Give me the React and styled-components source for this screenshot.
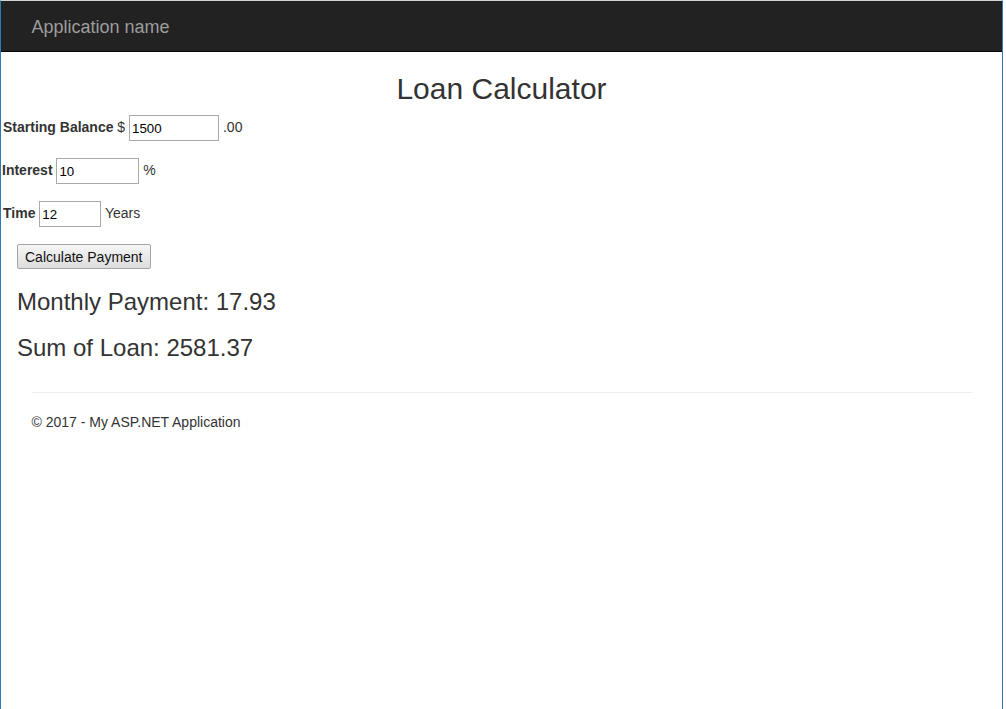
import React from "react";
import styled, { createGlobalStyle } from "styled-components";

const Global = createGlobalStyle`
  html, body { margin: 0; padding: 0; background: #fff; }
  body {
    font-family: "Liberation Sans", Arial, sans-serif;
    font-size: 14px;
    line-height: 1.42857;
    color: #333;
  }
  * { box-sizing: border-box; }
`;

const Screen = styled.div`
  width: 1006px;
  height: 709px;
  overflow: hidden;
  display: flex;
  background: #fff;
`;

const Window = styled.div`
  width: 1003px;
  height: 709px;
  border-left: 1px solid #2b79b5;
  border-right: 1px solid #2b79b5;
  border-top: 1px solid #d4d4d4;
  display: flex;
  flex-direction: column;
`;

const Navbar = styled.nav`
  height: 51px;
  background: #222;
  border-bottom: 1px solid #080808;
  flex-shrink: 0;
`;

const NavContainer = styled.div`
  width: 970px;
  margin: 0 auto;
  padding: 0 15px;
`;

const Brand = styled.a`
  display: block;
  padding: 16px 0 14px;
  font-size: 18px;
  line-height: 20px;
  color: #9d9d9d;
  text-decoration: none;
`;

const Body = styled.main`
  display: block;
`;

const Title = styled.h2`
  margin: 20px 0 10px;
  font-size: 30px;
  font-weight: 500;
  line-height: 33px;
  text-align: center;
  color: #333;
`;

const Form = styled.form`
  display: flex;
  flex-direction: column;
  gap: 17px;
  padding-left: 1px;
`;

const Row = styled.div`
  display: flex;
  align-items: center;
  height: 26px;
  padding-left: ${(p) => p.$indent || 0}px;
  white-space: pre;
`;

const Label = styled.b`
  font-weight: bold;
  color: #333;
`;

const Field = styled.input`
  width: ${(p) => p.$w}px;
  height: 26px;
  border: 1px solid #a9a9a9;
  padding: 1px 2px;
  font-family: "Liberation Sans", Arial, sans-serif;
  font-size: 13.3px;
  color: #000;
  background: #fff;
  margin: 0;
  outline: none;
`;

const Unit = styled.span`
  color: #333;
`;

const Results = styled.div`
  padding-left: 16px;
  margin-top: 17px;
`;

const Button = styled.button`
  display: block;
  height: 25px;
  padding: 0 7px;
  font-family: "Liberation Sans", Arial, sans-serif;
  font-size: 14px;
  color: #111;
  background: linear-gradient(#f6f6f6, #dddddd);
  border: 1px solid #a5a5a5;
  border-radius: 2px;
`;

const Result = styled.h3`
  margin: 20px 0 10px;
  font-size: 24px;
  font-weight: 500;
  line-height: 26.4px;
  color: #333;
`;

const Container = styled.div`
  width: 970px;
  margin: 0 auto;
  padding: 0 15px;
  display: flow-root;
`;

const Rule = styled.hr`
  margin: 20px 0;
  border: 0;
  border-top: 1px solid #eee;
`;

const Footer = styled.footer`
  p { margin: 0 0 10px; }
`;

export default function App() {
  return (
    <>
      <Global />
      <Screen>
        <Window>
          <Navbar>
            <NavContainer>
              <Brand href="#">Application name</Brand>
            </NavContainer>
          </Navbar>
          <Body>
            <Title>Loan Calculator</Title>
            <Form onSubmit={(e) => e.preventDefault()}>
              <Row $indent={1}>
                <Label>Starting Balance</Label>
                <Unit> $</Unit>
                <Unit> </Unit>
                <Field $w={90} defaultValue="1500" />
                <Unit> .00</Unit>
              </Row>
              <Row $indent={0}>
                <Label>Interest</Label>
                <Unit> </Unit>
                <Field $w={83} defaultValue="10" />
                <Unit> %</Unit>
              </Row>
              <Row $indent={1}>
                <Label>Time</Label>
                <Unit> </Unit>
                <Field $w={62} defaultValue="12" />
                <Unit> Years</Unit>
              </Row>
            </Form>
            <Results>
              <Button type="button">Calculate Payment</Button>
              <Result>Monthly Payment: 17.93</Result>
              <Result>Sum of Loan: 2581.37</Result>
            </Results>
            <Container>
              <Rule />
              <Footer>
                <p>© 2017 - My ASP.NET Application</p>
              </Footer>
            </Container>
          </Body>
        </Window>
      </Screen>
    </>
  );
}
